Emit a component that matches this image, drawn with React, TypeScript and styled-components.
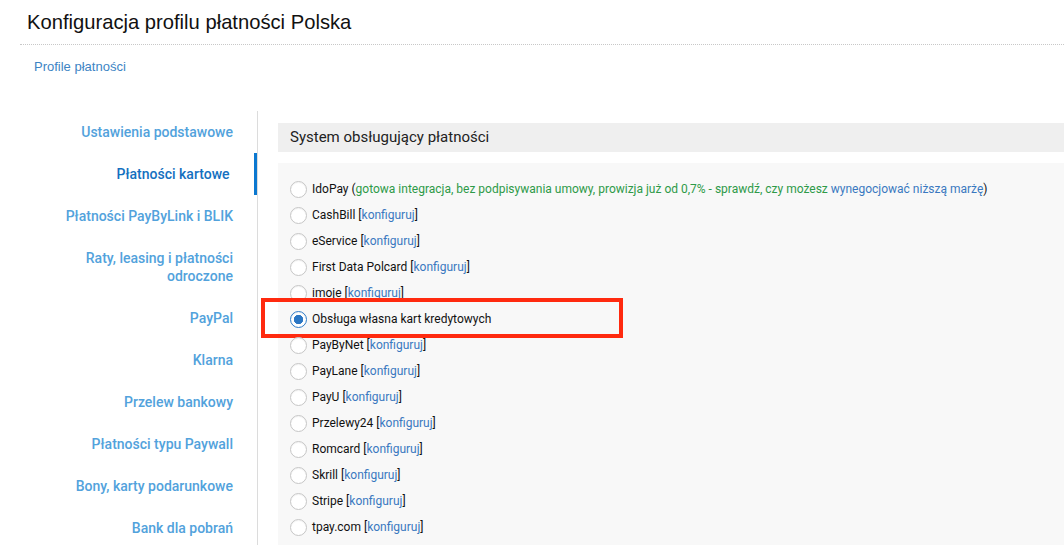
import React from "react";
import styled, { createGlobalStyle } from "styled-components";

const GlobalStyle = createGlobalStyle`
  html, body {
    margin: 0;
    padding: 0;
    background: #fff;
    overflow: hidden;
  }
  body {
    font-family: "Liberation Sans", Arial, sans-serif;
    color: #111;
  }
`;

const Page = styled.div`
  width: 1064px;
  height: 545px;
  overflow: hidden;
`;

const TitleBar = styled.div`
  margin-left: 20px;
  padding: 11px 0 10px 7px;
  border-bottom: 1px dotted #c8c8c8;
`;

const Title = styled.h1`
  margin: 0;
  font-size: 20.2px;
  font-weight: 400;
  line-height: 23px;
  color: #111;
`;

const Breadcrumb = styled.a`
  display: block;
  margin: 14px 0 0 34px;
  font-size: 13px;
  line-height: 16px;
  color: #3d84c4;
  text-decoration: none;
`;

const Main = styled.div`
  display: flex;
  margin-top: 36px;
`;

const Sidebar = styled.nav`
  width: 257px;
  flex-shrink: 0;
  border-right: 1px solid #dcdcdc;
  min-height: 460px;
`;

const NavItem = styled.a<{ $active?: boolean }>`
  display: block;
  padding: 12px 24px 12px 40px;
  text-align: right;
  font-family: Roboto, "Noto Sans", sans-serif;
  font-weight: 500;
  font-size: 14px;
  line-height: 18px;
  color: ${(p) => (p.$active ? "#1470c0" : "#52a2dc")};
  text-decoration: none;
  box-shadow: ${(p) => (p.$active ? "inset -3px 0 0 #0c78d0" : "none")};
`;

const Content = styled.section`
  flex: 1;
  padding: 12px 0 0 20px;
  font-family: Roboto, "Noto Sans", sans-serif;
`;

const SectionHeader = styled.h2`
  margin: 0;
  height: 29px;
  padding-left: 12px;
  background: #efefef;
  font-size: 15px;
  font-weight: 400;
  line-height: 29px;
  color: #222;
`;

const Panel = styled.div`
  margin-top: 11px;
  padding: 13px 0 0 12px;
  background: #f8f8f8;
  min-height: 400px;
`;

const Row = styled.label`
  position: relative;
  display: flex;
  align-items: center;
  height: 26px;
  font-size: 12px;
  color: #111;
  white-space: nowrap;
`;

const Radio = styled.input.attrs({ type: "radio", name: "system" })`
  appearance: none;
  width: 17px;
  height: 17px;
  margin: 0 5px 0 0;
  border: 1px solid #c6c6c6;
  border-radius: 50%;
  background: #fff;
  box-shadow: inset 0 1px 1px rgba(0, 0, 0, 0.05);
  &:checked {
    border-color: #2f7cc8;
    background: radial-gradient(circle, #2a76c4 0 4.4px, #fff 5px);
  }
`;

const Green = styled.span`
  color: #2e9a48;
`;

const Link = styled.a`
  color: #3a78c0;
  text-decoration: none;
`;

const Highlight = styled.span`
  position: absolute;
  left: -29px;
  top: -8px;
  width: 354px;
  height: 32px;
  border: 4px solid #ff2a0f;
  pointer-events: none;
`;

const navItems = [
  "Ustawienia podstawowe",
  "Płatności kartowe\u00a0",
  "Płatności PayByLink i BLIK",
  "Raty, leasing i płatności odroczone",
  "PayPal",
  "Klarna",
  "Przelew bankowy",
  "Płatności typu Paywall",
  "Bony, karty podarunkowe",
  "Bank dla pobrań",
];

const providers = [
  "CashBill",
  "eService",
  "First Data Polcard",
  "imoje",
  null,
  "PayByNet",
  "PayLane",
  "PayU",
  "Przelewy24",
  "Romcard",
  "Skrill",
  "Stripe",
  "tpay.com",
];

const App = () => {
  return (
    <Page>
      <GlobalStyle />
      <TitleBar>
        <Title>Konfiguracja profilu płatności Polska</Title>
      </TitleBar>
      <Breadcrumb href="#">Profile płatności</Breadcrumb>
      <Main>
        <Sidebar>
          {navItems.map((item, i) => (
            <NavItem key={item} href="#" $active={i === 1}>
              {item}
            </NavItem>
          ))}
        </Sidebar>
        <Content>
          <SectionHeader>System obsługujący płatności</SectionHeader>
          <Panel>
            <Row>
              <Radio />
              <span>
                IdoPay (
                <Green>
                  gotowa integracja, bez podpisywania umowy, prowizja już od
                  0,7% - sprawdź, czy możesz{" "}
                </Green>
                <Link href="#">wynegocjować niższą marżę</Link>)
              </span>
            </Row>
            {providers.map((name) =>
              name === null ? (
                <Row key="own">
                  <Radio defaultChecked />
                  <span>Obsługa własna kart kredytowych</span>
                  <Highlight />
                </Row>
              ) : (
                <Row key={name}>
                  <Radio />
                  <span>
                    {name} [<Link href="#">konfiguruj</Link>]
                  </span>
                </Row>
              ),
            )}
            {/* next option row, only its radio reaches into the view */}
            <Row>
              <Radio />
            </Row>
          </Panel>
        </Content>
      </Main>
    </Page>
  );
};

export default App;
